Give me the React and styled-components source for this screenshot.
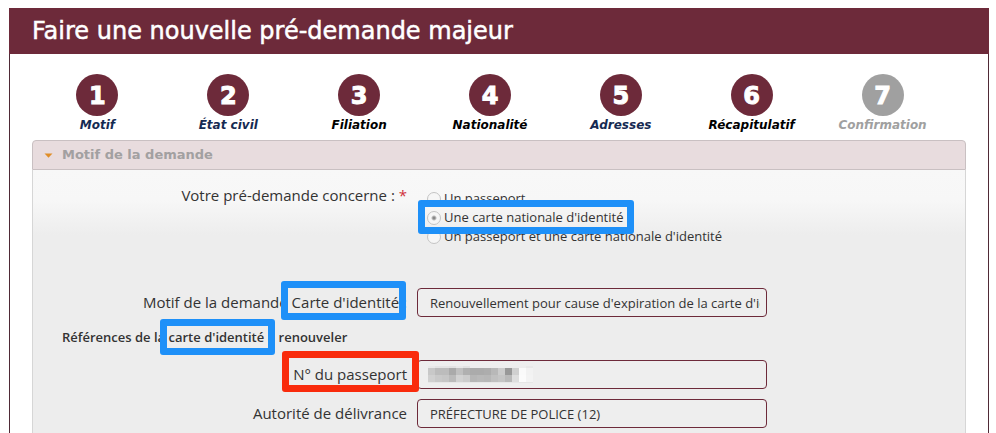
import React from 'react';
import styled, { createGlobalStyle, css } from 'styled-components';

const wine = '#6d2a3a';
const blue = '#1e90f8';
const red = '#f92b0c';

const GlobalStyle = createGlobalStyle`
  *, *::before, *::after { box-sizing: border-box; }
  body {
    margin: 0;
    background: #fff;
    color: #333;
    font-family: "Open Sans", "Noto Sans", sans-serif;
    font-size: 15px;
    line-height: 20px;
  }
`;

const Page = styled.div`
  display: flex;
  min-height: 100vh;
  padding: 8px 7px 0 9px;
`;

const Frame = styled.main`
  flex: 1;
  min-width: 0;
  display: flex;
  flex-direction: column;
  border: solid #4f2a36;
  border-width: 0 1px;
`;

const Title = styled.h1`
  margin: 0 -1px;
  padding: 8px 23px;
  background: ${wine};
  color: #fff;
  font: 24px/30px "DejaVu Sans", sans-serif;
  -webkit-text-stroke: 0.5px #fff;
`;

const Content = styled.div`
  flex: 1;
  display: flex;
  flex-direction: column;
  padding: 20px 22px 0;
`;

const Steps = styled.ol`
  display: grid;
  grid-template-columns: repeat(7, 1fr);
  margin: 0;
  padding: 0 18px 6px 0;
  list-style: none;
`;

const Step = styled.li`
  display: flex;
  flex-direction: column;
  align-items: center;
  color: ${({ $tone }) => ({ link: '#152a52', plain: '#000', off: '#a0a0a0' })[$tone]};
  font: italic bold 12px/18px "DejaVu Sans", sans-serif;
`;

const StepNumber = styled.span`
  width: 42px;
  height: 42px;
  border-radius: 50%;
  background: ${({ $off }) => ($off ? '#a0a0a0' : wine)};
  color: #fff;
  font: bold 24px/44px "DejaVu Sans", sans-serif;
  text-align: center;
  -webkit-text-stroke: 1px #fff;
`;

const StepLink = styled.a`
  color: inherit;
  text-decoration: none;
`;

const Panel = styled.section`
  flex: 1;
  display: flex;
  flex-direction: column;
`;

const PanelHeader = styled.h2`
  margin: 0;
  border: 1px solid #c9c0c2;
  border-radius: 4px 4px 0 0;
  background: #e8dcde;
`;

const PanelToggle = styled.button`
  display: flex;
  align-items: center;
  gap: 9px;
  width: 100%;
  padding: 4px 11px;
  border: 0;
  background: none;
  color: #a2a0a1;
  font: bold 13px/20px "DejaVu Sans", sans-serif;
  text-align: left;
`;

const PanelBody = styled.form`
  flex: 1;
  padding: 15px 0 5px;
  border: solid #d6d6d6;
  border-width: 0 1px;
  background: linear-gradient(#f8f8f8, #f7f7f7 30px, #ededed 65px) #ededed;
`;

const Row = styled.div`
  display: grid;
  grid-template-columns: 374fr 548fr;
  column-gap: 10px;
  align-items: ${({ $top }) => ($top ? 'start' : 'center')};
  margin-bottom: ${({ $gap }) => $gap || 10}px;
`;

const labelText = css`
  justify-self: end;
  padding-bottom: 2px;
  white-space: nowrap;
`;

const FieldLabel = styled.label`${labelText}`;
const GroupLabel = styled.div`${labelText}`;

const Required = styled.span`
  color: #d0303c;
`;

const SubHeading = styled.h3`
  margin: 0 0 13px;
  padding-left: 29px;
  font-size: 13px;
  font-weight: 600;
  line-height: 20px;
`;

const Options = styled.div`
  display: flex;
  flex-direction: column;
  align-items: flex-start;
  padding: 4px 0 0 10px;
`;

const Option = styled.label`
  position: relative;
  display: flex;
  align-items: center;
  gap: 3px;
  font-size: 13px;
  line-height: 19px;
`;

const Radio = styled.input`
  appearance: none;
  width: 14px;
  height: 14px;
  margin: 0;
  border: 1px solid #c4c4c4;
  border-radius: 50%;
  background: #f6f6f6;
  &:checked {
    background: radial-gradient(circle, #888 1px, #f6f6f6 3px);
  }
`;

const control = css`
  appearance: none;
  width: 100%;
  max-width: 350px;
  height: 29px;
  margin: 0;
  border: 1px solid ${wine};
  border-radius: 4px;
  background: #eee;
  color: #333;
  font: 13px/20px "Open Sans", "Noto Sans", sans-serif;
`;

const Select = styled.select`
  ${control}
  padding: 0 6px 0 12px;
`;

const TextInput = styled.input`
  ${control}
  padding: 0 12px;
`;

const Masked = styled.div`
  position: relative;
`;

const Mosaic = styled.svg`
  position: absolute;
  top: 6px;
  left: 11px;
  width: 107px;
  height: 17px;
`;

const Marked = styled.span`
  position: relative;
  display: inline-block;
`;

const Mark = styled.span`
  position: absolute;
  z-index: 1;
  inset: ${({ $inset }) => $inset};
  border: 7px solid ${({ $color }) => $color || blue};
  border-radius: 3px;
  pointer-events: none;
`;

const steps = [
  ['Motif', 'link'],
  ['État civil', 'link'],
  ['Filiation', 'plain'],
  ['Nationalité', 'plain'],
  ['Adresses', 'link'],
  ['Récapitulatif', 'plain'],
  ['Confirmation', 'off'],
];

const options = [
  'Un passeport',
  "Une carte nationale d'identité",
  "Un passeport et une carte nationale d'identité",
];

const mosaicRows = [
  { y: 0, h: 2, tones: ['#e9e9e9', '#e4e4e4', '#e4e4e4', '#e2e2e2', '#e8e8e8', '#e2e2e2', '#ededed', '#ededed', '#ededed', '#ededed', '#ededed', '#ededed', '#ededed', '#ededed', '#e8e8e8'] },
  { y: 2, h: 7, tones: ['#c8c8c8', '#bcbcbc', '#bcbcbc', '#aaaaaa', '#c0c0c0', '#b0b0b0', '#ababab', '#ababab', '#adadad', '#b8b8b8', '#cbcbcb', '#989898', '#d0d0d0', '#fafafa', '#f2f2f2'] },
  { y: 9, h: 7, tones: ['#d0d0d0', '#c9c9c9', '#c6c6c6', '#bbbbbb', '#d2d2d2', '#cccccc', '#b6b6b6', '#b9b9b9', '#b7b7b7', '#c0c0c0', '#c5c5c5', '#b9b9b9', '#dedede', '#fbfbfb', '#f3f3f3'] },
  { y: 16, h: 1, tones: Array(15).fill('#e6e6e6') },
];

export default function App() {
  return (
    <>
      <GlobalStyle />
      <Page>
        <Frame>
          <Title>Faire une nouvelle pré-demande majeur</Title>
          <Content>
            <Steps>
              {steps.map(([name, tone], i) => (
                <Step key={name} $tone={tone}>
                  <StepNumber $off={tone === 'off'}>{i + 1}</StepNumber>
                  {tone === 'link' ? <StepLink href="#">{name}</StepLink> : <span>{name}</span>}
                </Step>
              ))}
            </Steps>
            <Panel>
              <PanelHeader>
                <PanelToggle type="button" aria-expanded="true">
                  <svg width="9" height="5" viewBox="0 0 9 5" aria-hidden="true">
                    <path d="M0.5 0.5h8L4.5 4.8z" fill="#e08e28" />
                  </svg>
                  Motif de la demande
                </PanelToggle>
              </PanelHeader>
              <PanelBody>
                <Row $top $gap={42}>
                  <GroupLabel id="concerne">
                    Votre pré-demande concerne : <Required>*</Required>
                  </GroupLabel>
                  <Options role="radiogroup" aria-labelledby="concerne">
                    {options.map((text, i) => (
                      <Option key={text}>
                        <Radio type="radio" name="concerne" defaultChecked={i === 1} />
                        {text}
                        {i === 1 && <Mark $inset="-8px -11px -7px -9px" />}
                      </Option>
                    ))}
                  </Options>
                </Row>
                <Row>
                  <FieldLabel htmlFor="motif">
                    Motif de la demande{' '}
                    <Marked>
                      Carte d'identité
                      <Mark $inset="-11px -7px -8px -11px" />
                    </Marked>{' '}
                    :
                  </FieldLabel>
                  <Select id="motif">
                    <option>Renouvellement pour cause d'expiration de la carte d'identité</option>
                  </Select>
                </Row>
                <SubHeading>
                  Références de la{' '}
                  <Marked>
                    carte d'identité
                    <Mark $inset="-8px -11px -8px -9px" />
                  </Marked>{' '}
                  à renouveler
                </SubHeading>
                <Row>
                  <FieldLabel htmlFor="numero">
                    <Marked>
                      N° du passeport
                      <Mark $color={red} $inset="-13px -12px -8px -11px" />
                    </Marked>
                  </FieldLabel>
                  <Masked>
                    <TextInput id="numero" type="text" />
                    <Mosaic viewBox="0 0 107 17" shapeRendering="crispEdges" aria-hidden="true">
                      {mosaicRows.map(({ y, h, tones }) =>
                        tones.map((fill, i) => (
                          <rect key={`${y}-${i}`} x={i * 7} y={y} width="7" height={h} fill={fill} />
                        ))
                      )}
                    </Mosaic>
                  </Masked>
                </Row>
                <Row>
                  <FieldLabel htmlFor="autorite">Autorité de délivrance</FieldLabel>
                  <TextInput id="autorite" type="text" defaultValue="PRÉFECTURE DE POLICE (12)" />
                </Row>
              </PanelBody>
            </Panel>
          </Content>
        </Frame>
      </Page>
    </>
  );
}
